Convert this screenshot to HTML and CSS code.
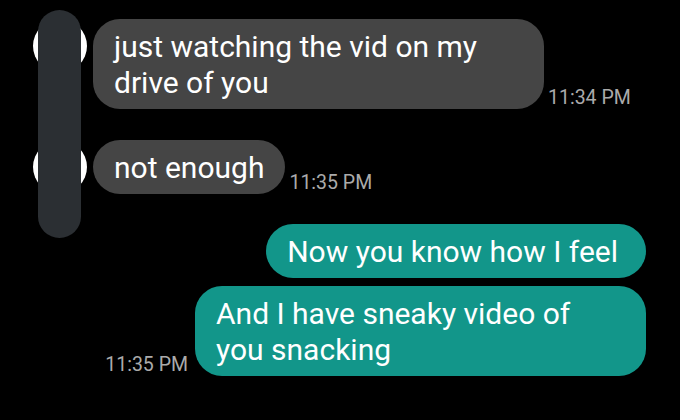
FILE: index.html
```html
<!DOCTYPE html>
<html>
<head>
<meta charset="utf-8">
<link rel="stylesheet" href="styles.css">
</head>
<body>
<div class="chat">
  <div class="row in first">
    <div class="avatar"></div>
    <div class="bubble grey wide">just watching the vid on my drive of you</div>
    <div class="time">11:34 PM</div>
  </div>
  <div class="row in second">
    <div class="avatar"></div>
    <div class="bubble grey">not enough</div>
    <div class="time">11:35 PM</div>
  </div>
  <div class="row out third">
    <div class="bubble teal">Now you know how I feel</div>
  </div>
  <div class="row out fourth">
    <div class="time">11:35 PM</div>
    <div class="bubble teal wide">And I have sneaky video of you snacking</div>
  </div>
  <div class="redact"></div>
</div>
</body>
</html>
```
FILE: styles.css
```css
html, body {
  margin: 0;
  padding: 0;
  background: #000;
}
.chat {
  position: relative;
  width: 680px;
  height: 420px;
  overflow: hidden;
  font-family: Roboto, "Liberation Sans", sans-serif;
  display: flex;
  flex-direction: column;
  padding-top: 19px;
  box-sizing: border-box;
}
.row {
  display: flex;
  align-items: flex-end;
}
.row.in {
  padding-left: 33px;
}
.row.out {
  justify-content: flex-end;
  padding-right: 34px;
}
.second { margin-top: 31px; }
.third { margin-top: 30px; }
.fourth { margin-top: 8px; }
.avatar {
  width: 54px;
  height: 54px;
  border-radius: 50%;
  background: #fff;
  align-self: flex-start;
  margin-right: 6px;
  flex: none;
}
.bubble {
  font-size: 30px;
  line-height: 36px;
  color: #fff;
  padding: 10px 21px 8px;
  border-radius: 27px;
  box-sizing: border-box;
}
.bubble.teal {
  padding-right: 28px;
}
.bubble.wide {
  width: 451px;
}
.grey { background: #454545; }
.teal { background: #12968a; }
.time {
  font-size: 19.5px;
  line-height: 20px;
  color: #ababab;
  margin-bottom: 1px;
  white-space: nowrap;
}
.in .time { margin-left: 4px; }
.out .time { margin-right: 7px; }
.redact {
  position: absolute;
  left: 38px;
  top: 10px;
  width: 43px;
  height: 228px;
  border-radius: 22px;
  background: #2b2f33;
}
```
